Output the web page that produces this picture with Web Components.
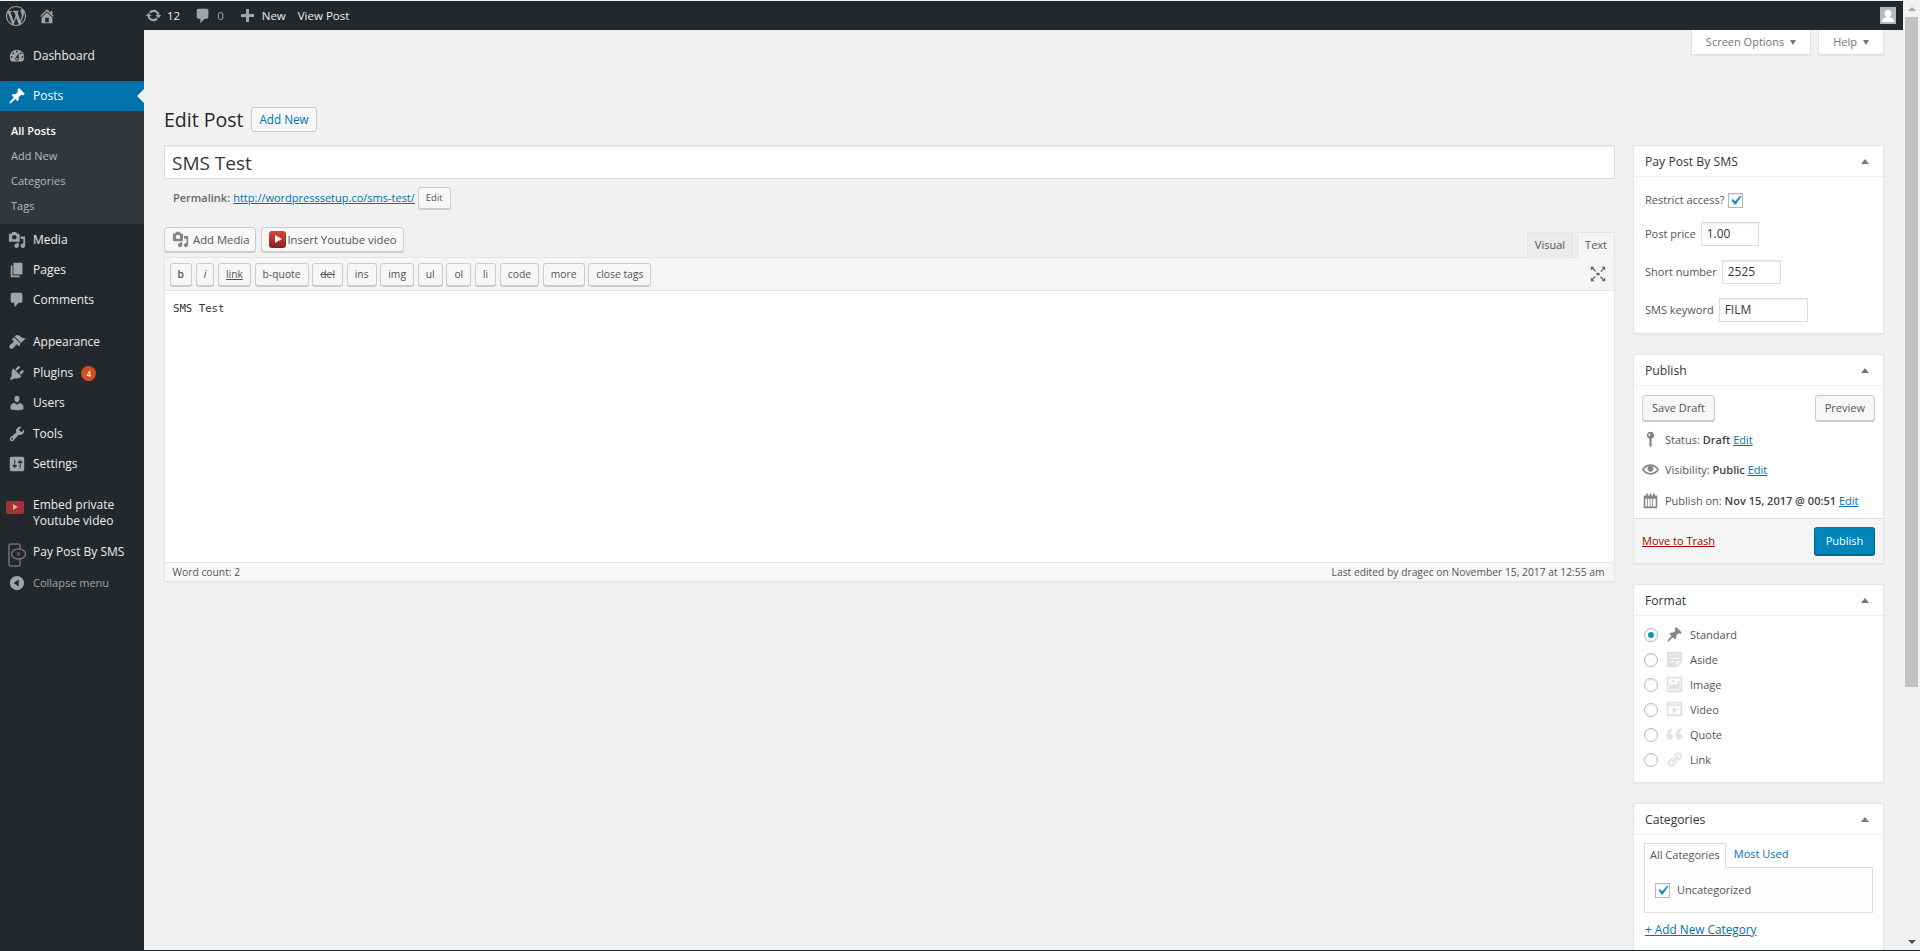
<!doctype html>
<html lang="en">
<head>
<meta charset="utf-8">
<title>Edit Post</title>
<style>
  html, body { margin: 0; height: 951px; overflow: hidden; background: #f1f1f1; }
  body { font: 11px/1.4 "Open Sans", "Liberation Sans", sans-serif; color: #444; }
  a { color: #0073aa; }
</style>
</head>
<body>
<wp-app>
  <wp-admin-bar slot="bar"></wp-admin-bar>
  <wp-side-menu slot="menu"></wp-side-menu>
  <wp-edit-screen slot="main"></wp-edit-screen>
</wp-app>

<script>
// dashicons, redrawn as paths on a 20x20 grid
const ICONS = {
  wp: 'M20 10c0-5.51-4.49-10-10-10C4.48 0 0 4.49 0 10c0 5.52 4.48 10 10 10 5.51 0 10-4.48 10-10zM7.78 15.37L4.37 6.22c.55-.02 1.17-.08 1.17-.08.5-.06.44-1.13-.06-1.11 0 0-1.45.11-2.37.11-.18 0-.37 0-.58-.01C4.12 2.69 6.87 1.11 10 1.11c2.33 0 4.45.87 6.05 2.34-.68-.11-1.65.39-1.65 1.58 0 .74.45 1.36.9 2.1.35.61.55 1.36.55 2.46 0 1.49-1.4 5-1.4 5l-3.03-8.37c.54-.02.82-.17.82-.17.5-.05.44-1.25-.06-1.22 0 0-1.44.12-2.38.12-.87 0-2.33-.12-2.33-.12-.5-.03-.56 1.2-.06 1.22l.92.08 1.26 3.41zM17.41 10c.24-.64.74-1.87.43-4.25.7 1.29 1.05 2.71 1.05 4.25 0 3.29-1.73 6.24-4.4 7.78.97-2.59 1.94-5.2 2.92-7.78zM6.1 18.09C3.12 16.65 1.11 13.53 1.11 10c0-1.3.23-2.48.72-3.59C3.25 10.3 4.67 14.2 6.1 18.09zm4.03-6.63l2.58 6.98c-.86.29-1.76.45-2.71.45-.79 0-1.57-.11-2.29-.33.81-2.38 1.62-4.74 2.42-7.1z',
  home: 'M16 8.5l1.53 1.53-1.06 1.06L10 4.62l-6.47 6.47-1.06-1.06L10 2.5l4 4v-2h2v4zm-6-2.46l6 5.99V18H4v-6.03zM12 17v-5H8v5h4z',
  update: 'M10.2 3.28c3.53 0 6.43 2.61 6.92 6h2.08l-3.5 4-3.5-4h2.32c-.45-1.97-2.21-3.45-4.32-3.45-1.45 0-2.73.71-3.54 1.78L4.95 5.66C6.23 4.2 8.11 3.28 10.2 3.28zm-.4 13.44c-3.52 0-6.43-2.61-6.92-6H.8l3.5-4c1.17 1.33 2.33 2.67 3.5 4H5.48c.45 1.97 2.21 3.45 4.32 3.45 1.45 0 2.73-.71 3.54-1.78l1.71 1.95c-1.28 1.46-3.15 2.38-5.25 2.38z',
  comment: 'M5 2h9c1.1 0 2 .9 2 2v7c0 1.1-.9 2-2 2h-2l-5 5v-5H5c-1.1 0-2-.9-2-2V4c0-1.1.9-2 2-2z',
  plus: 'M17 7v3h-5v5H9v-5H4V7h5V2h3v5h5z',
  dashboard: 'M3.76 16h12.48c1.1-1.37 1.76-3.11 1.76-5 0-4.42-3.58-8-8-8s-8 3.58-8 8c0 1.89.66 3.63 1.76 5zM10 4c.55 0 1 .45 1 1s-.45 1-1 1-1-.45-1-1 .45-1 1-1zM6 6c.55 0 1 .45 1 1s-.45 1-1 1-1-.45-1-1 .45-1 1-1zm8 0c.55 0 1 .45 1 1s-.45 1-1 1-1-.45-1-1 .45-1 1-1zm-5.37 5.55L12 7v6c0 1.1-.9 2-2 2s-2-.9-2-2c0-.57.24-1.08.63-1.45zM4 10c.55 0 1 .45 1 1s-.45 1-1 1-1-.45-1-1 .45-1 1-1zm12 0c.55 0 1 .45 1 1s-.45 1-1 1-1-.45-1-1 .45-1 1-1zm-5 3c0-.55-.45-1-1-1s-1 .45-1 1 .45 1 1 1 1-.45 1-1z',
  post: 'M10.44 3.02l1.82-1.82 6.36 6.35-1.83 1.82c-1.05-.68-2.48-.57-3.41.36l-.75.75c-.92.93-1.04 2.35-.35 3.41l-1.83 1.82-2.41-2.41-2.8 2.79c-.42.42-3.38 2.71-3.8 2.29s1.86-3.39 2.28-3.81l2.79-2.79L4.1 9.36l1.83-1.82c1.05.69 2.48.57 3.4-.36l.75-.75c.93-.92 1.05-2.35.36-3.41z',
  media: 'M13 11V4c0-.55-.45-1-1-1h-1.67L9 1H5L3.67 3H2c-.55 0-1 .45-1 1v7c0 .55.45 1 1 1h10c.55 0 1-.45 1-1zM7 4.5c1.38 0 2.5 1.12 2.5 2.5S8.38 9.5 7 9.5 4.5 8.38 4.5 7 5.62 4.5 7 4.5zM14 6h5v10.5c0 1.38-1.12 2.5-2.5 2.5S14 17.88 14 16.5s1.12-2.5 2.5-2.5c.17 0 .34.02.5.05V9h-3V6zm-4 8.05V13h2v3.5c0 1.38-1.12 2.5-2.5 2.5S7 17.88 7 16.5 8.12 14 9.5 14c.17 0 .34.02.5.05z',
  page: 'M6 15V2h10v13H6zm-1 1h8v2H3V5h2v11z',
  appearance: 'M14.48 11.06L7.41 3.99l1.5-1.5c.5-.56 2.3-.47 3.51.32 1.21.8 1.43 1.28 2.91 2.1 1.18.64 2.45 1.26 4.45.85zm-.71.71L6.7 4.7 4.93 6.47c-.39.39-.39 1.02 0 1.41l1.06 1.06c.39.39.39 1.03 0 1.42-.6.6-1.43 1.11-2.21 1.69-.35.26-.7.53-1.01.84C1.43 13.71.96 15.65 2.15 16.85s3.14.73 4.36-.49c.31-.31.58-.66.84-1.01.58-.78 1.09-1.61 1.69-2.21.39-.39 1.02-.39 1.41 0l1.06 1.06c.39.39 1.02.39 1.41 0z',
  plugins: 'M13.11 4.36L9.87 7.6 8 5.73l3.24-3.24c.35-.34 1.05-.2 1.56.32.52.51.66 1.21.31 1.55zm-8 1.77l.91-1.12 9.01 9.01-1.19.84c-.71.71-2.63 1.16-3.82 1.16H6.14L4.9 17.26c-.59.59-1.54.59-2.12 0-.59-.58-.59-1.53 0-2.12l1.24-1.24v-3.88c0-1.13.4-3.19 1.09-3.89zm7.26 3.97l3.24-3.24c.34-.35 1.04-.21 1.55.31.52.51.66 1.21.31 1.55l-3.24 3.25z',
  users: 'M10 9.25c-2.27 0-2.73-3.44-2.73-3.44C7 4.02 7.82 2 9.97 2c2.16 0 2.98 2.02 2.71 3.81 0 0-.41 3.44-2.68 3.44zm0 2.57L12.72 10c2.39 0 4.52 2.33 4.52 4.53v2.49s-3.65 1.13-7.24 1.13c-3.65 0-7.24-1.13-7.24-1.13v-2.49c0-2.25 1.94-4.48 4.47-4.48z',
  tools: 'M16.68 9.77c-1.34 1.34-3.3 1.67-4.95.99l-5.41 6.52c-.99.99-2.59.99-3.58 0s-.99-2.59 0-3.57l6.52-5.42c-.68-1.65-.35-3.61.99-4.95 1.28-1.28 3.12-1.62 4.72-1.06l-2.89 2.89 2.82 2.82 2.86-2.87c.53 1.58.18 3.39-1.08 4.65zM3.81 16.21c.4.39 1.04.39 1.43 0 .4-.4.4-1.04 0-1.43-.39-.4-1.03-.4-1.43 0-.39.39-.39 1.03 0 1.43z',
  settings: 'M18 16V4c0-1.1-.9-2-2-2H4c-1.1 0-2 .9-2 2v12c0 1.1.9 2 2 2h12c1.1 0 2-.9 2-2zM8 11h1c.55 0 1 .45 1 1s-.45 1-1 1H8v1.5c0 .28-.22.5-.5.5s-.5-.22-.5-.5V13H6c-.55 0-1-.45-1-1s.45-1 1-1h1V5.5c0-.28.22-.5.5-.5s.5.22.5.5V11zm5-2h-1c-.55 0-1-.45-1-1s.45-1 1-1h1V5.5c0-.28.22-.5.5-.5s.5.22.5.5V7h1c.55 0 1 .45 1 1s-.45 1-1 1h-1v5.5c0 .28-.22.5-.5.5s-.5-.22-.5-.5V9z',
  collapse: 'M10 2.16c4.33 0 7.84 3.51 7.84 7.84s-3.51 7.84-7.84 7.84S2.16 14.33 2.16 10 5.71 2.16 10 2.16zm2 11.72V6.12L6.18 9.97z',
  aside: 'M1 1h18v12l-6 6H1V1zm3 3v1h12V4H4zm0 4v1h12V8H4zm6 5v-1H4v1h6zm2 4l5-5h-5v5z',
  image: 'M2.25 1h15.5c.69 0 1.25.56 1.25 1.25v15.5c0 .69-.56 1.25-1.25 1.25H2.25C1.56 19 1 18.44 1 17.75V2.25C1 1.56 1.56 1 2.25 1zM17 17V3H3v14h14zM10 6c0-1.1-.9-2-2-2s-2 .9-2 2 .9 2 2 2 2-.9 2-2zm3 5s0-6 3-6v10c0 .55-.45 1-1 1H5c-.55 0-1-.45-1-1V8c2 0 3 4 3 4s1-3 3-3 3 2 3 2z',
  video: 'M2 1h16c.55 0 1 .45 1 1v16l-18-.02V2c0-.55.45-1 1-1zm4 1L4 5h1l2-3H6zm4 0H9L7 5h1zm3 0h-1l-2 3h1zm3 0h-1l-2 3h1zm1 14V6H3v10h14zM8 7l6 4-6 4V7z',
  quote: 'M8.54 12.74c0-.87-.24-1.61-.72-2.22-.73-.92-2.14-1.03-2.96-.85-.34-1.93 1.3-4.39 3.42-5.45L6.65 2.45C3.45 3.93.8 7.34.8 11.09c0 2.58 1.1 4.35 2.9 4.8 2.54.63 4.84-1.26 4.84-3.15zm10.48 0c0-.87-.24-1.61-.72-2.22-.73-.92-2.14-1.03-2.96-.85-.34-1.93 1.3-4.39 3.42-5.45l-1.63-1.77c-3.2 1.48-5.85 4.89-5.85 8.64 0 2.58 1.1 4.35 2.9 4.8 2.54.63 4.84-1.26 4.84-3.15z',
  link: 'M17.74 2.76c1.68 1.69 1.68 4.41 0 6.1l-1.53 1.52c-1.12 1.12-2.7 1.47-4.14 1.09l2.62-2.61.76-.77.76-.76c.84-.84.84-2.2 0-3.04-.84-.85-2.2-.85-3.04 0l-.77.76-3.38 3.38c-.37-1.44-.02-3.02 1.1-4.14l1.52-1.53c1.69-1.68 4.42-1.68 6.1 0zM8.59 13.43l5.34-5.34c.42-.42.42-1.1 0-1.52-.44-.43-1.13-.39-1.53 0l-5.33 5.34c-.42.42-.42 1.1 0 1.52.44.43 1.13.39 1.52 0zm-.76 2.29l4.14-4.15c.38 1.44.03 3.02-1.09 4.14l-1.52 1.53c-1.69 1.68-4.41 1.68-6.1 0-1.68-1.68-1.68-4.42 0-6.1l1.53-1.52c1.12-1.12 2.7-1.47 4.14-1.1l-4.14 4.15c-.85.84-.85 2.2 0 3.05.84.84 2.2.84 3.04 0z',
  pin: 'M10 1a4.2 4.2 0 0 0-1.3 8.2V17l1.3 2.5 1.3-2.5V9.2A4.2 4.2 0 0 0 10 1zM8.6 3.2a1.2 1.2 0 1 1 0 2.4 1.2 1.2 0 0 1 0-2.4z',
  eye: 'M19.7 9.4C17.7 6 14 3.9 10 3.9S2.3 6 .3 9.4L0 10l.3.6c2 3.4 5.7 5.5 9.7 5.5s7.7-2.1 9.7-5.5l.3-.6-.3-.6zM10 14.1c-3.1 0-6-1.6-7.7-4.1C3.6 8 5.7 6.6 8 6.1c-.9.6-1.5 1.7-1.5 2.9 0 1.9 1.6 3.5 3.5 3.5s3.5-1.6 3.5-3.5c0-1.2-.6-2.3-1.5-2.9 2.3.5 4.4 1.9 5.7 3.9-1.7 2.5-4.6 4.1-7.7 4.1z',
  calendar: 'M15 4h3v15H2V4h3V2.5a1 1 0 0 1 2 0V4h2V2.5a1 1 0 0 1 2 0V4h2V2.5a1 1 0 0 1 2 0V4zM4 8v9h2V8H4zm3 0v9h2V8H7zm3 0v9h2V8h-2zm3 0v9h3V8h-3z',
  expand: 'M1 1h4.5L4.2 2.6 7.6 6 6.4 7.2 3 3.8 1 5.5zM19 1v4.5l-1.6-1.3L14 7.6 12.8 6.4 16.2 3 14.5 1zM1 19v-4.5l1.6 1.3L6 12.4 7.2 13.6 3.8 17 5.5 19zM19 19h-4.5l1.3-1.6L12.4 14 13.6 12.8 17 16.2 19 14.5zM8 8.3h4v3.4H8z',
  check: 'M14.83 4.89l1.34.94-5.81 8.38H9.02L5.78 9.67l1.34-1.25 2.57 2.4z'
}

class WpIcon extends HTMLElement {
  connectedCallback () {
    const size = this.getAttribute('size') || 18
    if (!this.shadowRoot) this.attachShadow({ mode: 'open' })
    this.shadowRoot.innerHTML = `
      <style>
        :host { display: inline-flex; flex: none; width: ${size}px; height: ${size}px; color: inherit; }
        svg { display: block; width: 100%; height: 100%; fill: currentColor; }
      </style>
      <svg viewBox="0 0 20 20"><path fill-rule="evenodd" d="${ICONS[this.getAttribute('name')] || ''}"/></svg>`
  }
}
customElements.define('wp-icon', WpIcon)

// outer frame: bar on top, menu + main below, scrollbar on the right edge
class WpApp extends HTMLElement {
  constructor () {
    super()
    this.attachShadow({ mode: 'open' })
    this.shadowRoot.innerHTML = `
      <style>
        :host { display: grid; grid-template-columns: 144px minmax(0, 1fr) 17px; grid-template-rows: 29px minmax(0, 1fr) 1px;
                height: 951px; padding-top: 1px; box-sizing: border-box; overflow: hidden; }
        ::slotted([slot=bar]) { grid-column: 1 / 3; }
        .track { grid-column: 3; grid-row: 1 / 3; margin-top: -1px; display: flex; flex-direction: column; background: #f1f1f1; align-items: center; }
        .arrow { flex: none; height: 17px; width: 100%; display: flex; align-items: center; justify-content: center; }
        .arrow i { width: 0; height: 0; border: 4px solid transparent; }
        .up i { border-bottom: 4px solid #a3a3a3; border-top: 0; }
        .down i { border-top: 4px solid #505050; border-bottom: 0; }
        .thumb { width: 13px; height: 670px; flex: none; background: #c1c1c1; }
        .rest { flex: 1; }
        .edge { grid-column: 1 / -1; grid-row: 3; background: #23282d; }
      </style>
      <slot name="bar"></slot>
      <slot name="menu"></slot>
      <slot name="main"></slot>
      <div class="track">
        <div class="arrow up"><i></i></div>
        <div class="thumb"></div>
        <div class="rest"></div>
        <div class="arrow down"><i></i></div>
      </div>
      <div class="edge"></div>`
  }
}
customElements.define('wp-app', WpApp)

class WpAdminBar extends HTMLElement {
  constructor () {
    super()
    this.attachShadow({ mode: 'open' })
    this.shadowRoot.innerHTML = `
      <style>
        :host { display: flex; align-items: center; background: #23282d; color: #eee; height: 29px; font-size: 11.5px; line-height: 29px; }
        .grp { display: flex; align-items: center; }
        wp-icon { color: #a0a5aa; }
        .logo { margin-left: 6px; }
        .home { margin-left: 12px; }
        .upd { margin-left: 89px; }
        .num { margin-left: 5px; }
        .com { margin-left: 14px; color: #a0a5aa; }
        .new { margin-left: 13px; }
        .new wp-icon { position: relative; top: 1px; }
        .view { margin-left: 12px; }
        .me { margin-left: auto; margin-right: 7px; width: 16px; height: 17px; display: block; }
      </style>
      <wp-icon class="logo" name="wp" size="20"></wp-icon>
      <wp-icon class="home" name="home" size="18"></wp-icon>
      <div class="grp upd"><wp-icon name="update" size="17"></wp-icon><span class="num">12</span></div>
      <div class="grp com"><wp-icon name="comment" size="18"></wp-icon><span class="num">0</span></div>
      <div class="grp new"><wp-icon name="plus" size="20"></wp-icon><span class="num">New</span></div>
      <div class="grp view"><span>View Post</span></div>
      <svg class="me" viewBox="0 0 16 17"><rect width="16" height="17" fill="#b8b8b8"/><circle cx="8" cy="6.5" r="3.4" fill="#fff"/><path d="M2 15c0-3.5 2.6-5 6-5s6 1.5 6 5z" fill="#fff"/></svg>`
  }
}
customElements.define('wp-admin-bar', WpAdminBar)

// one row of the left menu
class WpMenuItem extends HTMLElement {
  constructor () {
    super()
    this.attachShadow({ mode: 'open' })
    this.shadowRoot.innerHTML = `
      <style>
        :host { display: flex; align-items: center; color: #eee; font-size: 12px; line-height: 16px; min-height: 30.4px; position: relative; }
        :host([current]) { background: #0073aa; color: #fff; min-height: 30px; }
        :host([current]) .ic { color: #fff; }
        :host([current])::after { content: ""; position: absolute; right: 0; top: 50%; margin-top: -7px; border: 7px solid transparent; border-right-color: #f1f1f1; border-left: 0; }
        :host([dim]) { color: #a0a5aa; font-size: 11px; }
        .ic { width: 33px; flex: none; padding-left: 7.5px; box-sizing: border-box; color: #a0a5aa; display: flex; }
      </style>
      <div class="ic"><slot name="icon"></slot></div>
      <div><slot></slot></div>`
  }
}
customElements.define('wp-menu-item', WpMenuItem)

class WpSideMenu extends HTMLElement {
  constructor () {
    super()
    this.attachShadow({ mode: 'open' })
    const item = (name, label, extra = '') => `<wp-menu-item ${extra}><wp-icon slot="icon" name="${name}"></wp-icon>${label}</wp-menu-item>`
    this.shadowRoot.innerHTML = `
      <style>
        :host { display: block; background: #23282d; height: 100%; padding-top: 11px; box-sizing: border-box; }
        .sub { background: #32373c; padding: 7px 0 6px; font-size: 11px; color: rgba(240,245,250,.7); }
        .sub div { height: 25px; line-height: 25px; padding-left: 11px; }
        .sub .on { color: #fff; font-weight: 600; }
        .gap { height: 11.6px; }
        .badge { display: inline-block; width: 15px; height: 15px; line-height: 15px; margin-left: 5px; border-radius: 50%; background: #d54e21; color: #fff; font-size: 8px; text-align: center; vertical-align: 0; font-weight: 600; }
        .top { margin-bottom: 10px; }
        .yt { margin-top: 16px; min-height: 36px; }
        .pay { margin-top: 6px; }
        .ytico { display: block; width: 18px; height: 13px; margin: -12px 0 0 -1.5px; border-radius: 2px; background: #a23236; position: relative; }
        .ytico::after { content: ""; position: absolute; left: 7px; top: 3.5px; border: 3px solid transparent; border-left: 5px solid #e9a5a5; border-right: 0; }
        svg.phone { display: block; margin: 6px 0 0 0; }
      </style>
      <div class="top">${item('dashboard', 'Dashboard')}</div>
      ${item('post', 'Posts', 'current')}
      <div class="sub">
        <div class="on">All Posts</div><div>Add New</div><div>Categories</div><div>Tags</div>
      </div>
      ${item('media', 'Media')}
      ${item('page', 'Pages')}
      ${item('comment', 'Comments')}
      <div class="gap"></div>
      ${item('appearance', 'Appearance')}
      ${item('plugins', 'Plugins <span class="badge">4</span>')}
      ${item('users', 'Users')}
      ${item('tools', 'Tools')}
      ${item('settings', 'Settings')}
      <wp-menu-item class="yt"><span slot="icon" class="ytico"></span>Embed private<br>Youtube video</wp-menu-item>
      <wp-menu-item class="pay"><svg slot="icon" class="phone" width="20" height="24" viewBox="0 0 20 24" fill="none" stroke="#6d7278" stroke-width="1.5"><rect x="1" y="1" width="11" height="22" rx="2"/><ellipse cx="10.5" cy="11" rx="7" ry="5" fill="#23282d"/><circle cx="10.5" cy="11" r="2" fill="#7a4044" stroke="none"/></svg>Pay Post By SMS</wp-menu-item>
      <wp-menu-item dim><wp-icon slot="icon" name="collapse"></wp-icon>Collapse menu</wp-menu-item>`
  }
}
customElements.define('wp-side-menu', WpSideMenu)

class WpButton extends HTMLElement {
  constructor () {
    super()
    this.attachShadow({ mode: 'open' })
    this.shadowRoot.innerHTML = `
      <style>
        :host { display: inline-flex; align-items: center; justify-content: center; box-sizing: border-box; height: 26px; padding: 0 9px; font-size: 11px; color: #555; background: #f7f7f7; border: 1px solid #ccc; border-radius: 3px; box-shadow: 0 1px 0 #ccc; white-space: nowrap; }
        :host([primary]) { background: #0085ba; border-color: #0073aa #006799 #006799; box-shadow: 0 1px 0 #006799; color: #fff; height: 28px; width: 61px; padding: 0; }
        :host([outline]) { font-size: 11.7px; height: 25px; padding: 0 7px; color: #0073aa; box-shadow: none; }
        :host([small]) { height: 22px; padding: 0 7px; font-size: 9.5px; }
        :host([qt]) { height: 23px; padding: 0 7px; font-size: 10.33px; line-height: 1; }
      </style>
      <slot></slot>`
  }
}
customElements.define('wp-button', WpButton)

class WpMetaBox extends HTMLElement {
  constructor () {
    super()
    this.attachShadow({ mode: 'open' })
    this.shadowRoot.innerHTML = `
      <style>
        :host { display: block; background: #fff; border: 1px solid #e5e5e5; box-shadow: 0 1px 1px rgba(0,0,0,.04); font-size: 11px; color: #555; }
        header { display: flex; align-items: center; justify-content: space-between; box-sizing: border-box; height: 31px; padding: 1px 11px 0; border-bottom: 1px solid #eee; font-size: 12.2px; color: #32373c; }
        header i { width: 0; height: 0; border: 4px solid transparent; border-bottom: 5px solid #72777c; border-top: 0; margin-right: 3px; }
      </style>
      <header><span><slot name="title"></slot></span><i></i></header>
      <slot></slot>`
  }
}
customElements.define('wp-meta-box', WpMetaBox)

class WpField extends HTMLElement {
  constructor () {
    super()
    this.attachShadow({ mode: 'open' })
    const w = this.getAttribute('width')
    this.shadowRoot.innerHTML = `
      <style>
        :host { display: flex; align-items: center; gap: 5px; color: #555; font-size: 11px; }
        .box { box-sizing: border-box; width: ${w}px; height: 24px; line-height: 22px; padding-left: 5px; border: 1px solid #ddd; box-shadow: inset 0 1px 2px rgba(0,0,0,.07); background: #fff; font-size: 12px; color: #32373c; }
      </style>
      <span><slot name="label"></slot></span>
      <div class="box"><slot></slot></div>`
  }
}
customElements.define('wp-field', WpField)

class WpCheckbox extends HTMLElement {
  constructor () {
    super()
    this.attachShadow({ mode: 'open' })
    this.shadowRoot.innerHTML = `
      <style>
        :host { display: inline-flex; flex: none; box-sizing: border-box; width: 15px; height: 15px; background: #fff; border: 1px solid #b4b9be; box-shadow: inset 0 1px 2px rgba(0,0,0,.1); color: #1e8cbe; align-items: center; justify-content: center; }
      </style>
      <wp-icon name="check" size="19"></wp-icon>`
  }
}
customElements.define('wp-checkbox', WpCheckbox)

class WpRadio extends HTMLElement {
  constructor () {
    super()
    this.attachShadow({ mode: 'open' })
    this.shadowRoot.innerHTML = `
      <style>
        :host { display: flex; align-items: center; height: 25px; font-size: 11px; color: #555; }
        .r { width: 14px; height: 14px; flex: none; box-sizing: border-box; border: 1px solid #b4b9be; border-radius: 50%; margin-right: 8px; display: flex; align-items: center; justify-content: center; background: #fff; box-shadow: inset 0 1px 2px rgba(0,0,0,.1); }
        :host([checked]) .r::after { content: ""; width: 6px; height: 6px; border-radius: 50%; background: #1e8cbe; }
        wp-icon { color: #e0e0e0; margin-right: 7px; }
        :host([checked]) wp-icon { color: #82878c; }
      </style>
      <span class="r"></span><wp-icon name="${this.getAttribute('icon')}" size="17"></wp-icon><slot></slot>`
  }
}
customElements.define('wp-radio', WpRadio)

class WpEditScreen extends HTMLElement {
  constructor () {
    super()
    this.attachShadow({ mode: 'open' })
    const qt = ['<b style="font-weight:600">b</b>', '<i>i</i>', '<u>link</u>', 'b-quote', '<s>del</s>', 'ins', 'img', 'ul', 'ol', 'li', 'code', 'more', 'close tags']
    this.shadowRoot.innerHTML = `
      <style>
        :host { display: block; overflow: hidden; min-width: 0; height: 100%; padding: 0 19px 0 20px; box-sizing: border-box; }
        a { color: #0073aa; }
        .tabs { display: flex; justify-content: flex-end; gap: 7px; height: 26px; }
        .tab { display: flex; align-items: center; gap: 6px; height: 25px; box-sizing: border-box; padding: 0 14px; background: #fff; border: 1px solid #e1e1e1; border-top: 0; box-shadow: 0 1px 1px rgba(0,0,0,.04); font-size: 11px; color: #72777c; }
        .tab i { width: 0; height: 0; border: 3.5px solid transparent; border-top: 5px solid #72777c; border-bottom: 0; }
        .cols { display: grid; grid-template-columns: minmax(0, 1fr) 251px; column-gap: 18px; margin-top: 51px; }
        h1 { margin: 0; font-size: 19.5px; font-weight: 400; line-height: 25px; color: #23282d; display: flex; align-items: flex-start; gap: 8px; grid-column: 1 / 3; height: 38px; }
        .title { box-sizing: border-box; height: 34px; border: 1px solid #ddd; background: #fff; font-size: 19px; line-height: 32px; padding: 1px 0 0 7px; color: #32373c; box-shadow: inset 0 1px 2px rgba(0,0,0,.07); }
        .perma { display: flex; align-items: center; height: 22px; margin-top: 8px; padding-left: 9px; font-size: 11px; color: #666; gap: 3px; }
        .perma b { font-weight: 600; }
        .bar { display: flex; align-items: flex-start; margin-top: 18px; height: 30px; }
        .bar wp-button { margin-right: 5px; height: 25px; padding: 0 6px 0 7px; font-size: 11.3px; }
        .bar wp-icon { color: #82878c; margin-right: 4px; }
        .yt { width: 17px; height: 17px; border-radius: 3px; background: linear-gradient(#d8453e, #8f1e1e); margin-right: 1px; position: relative; flex: none; }
        .yt::after { content: ""; position: absolute; left: 6px; top: 4px; border: 4.5px solid transparent; border-left: 7px solid #f4f4f4; border-right: 0; }
        .mode { margin-left: auto; align-self: flex-end; display: flex; gap: 4px; font-size: 11px; color: #555; }
        .mode div { box-sizing: border-box; height: 25px; line-height: 24px; padding: 0 7px; background: #ebebeb; border: 1px solid #e5e5e5; border-bottom: 0; }
        .mode .on { background: #f5f5f5; height: 26px; margin-bottom: -1px; position: relative; z-index: 1; }
        .editor { border: 1px solid #e5e5e5; box-shadow: 0 1px 1px rgba(0,0,0,.04); }
        .tools { display: flex; align-items: center; gap: 3.7px; height: 33px; padding: 0 5px 0 4.5px; box-sizing: border-box; background: #f5f5f5; border-bottom: 1px solid #e5e5e5; }
        .tools wp-icon { margin-left: auto; margin-right: 3px; color: #666; }
        .text { height: 271px; box-sizing: border-box; background: #fff; padding: 11px 8px; font: 10.7px/1.4 "DejaVu Sans Mono", "Liberation Mono", monospace; color: #333; }
        .status { display: flex; justify-content: space-between; align-items: center; box-sizing: border-box; height: 19px; padding: 0 9.5px 0 7.5px; font-size: 10.3px; color: #555; background: #f7f7f7; border-top: 1px solid #e5e5e5; }
        .side { display: flex; flex-direction: column; gap: 20px; }
        .pay { padding: 14px 11px 11px; }
        .pay wp-field + wp-field { margin-top: 14px; }
        .pay .r { display: flex; align-items: center; gap: 3px; height: 18px; margin-bottom: 13px; }
        .pub { padding: 9px 8px 2.5px; }
        .pub .btns { display: flex; justify-content: space-between; margin-bottom: 3px; }
        .row { display: flex; align-items: center; height: 30.5px; gap: 6px; }
        .row wp-icon { color: #82878c; }
        .row b { font-weight: 600; color: #444; }
        .foot { display: flex; justify-content: space-between; align-items: center; box-sizing: border-box; height: 45px; padding: 0 8px; background: #f5f5f5; border-top: 1px solid #ddd; }
        .foot a { color: #a00; }
        .fmt { padding: 6px 10px 10px 10px; }
        .cat { padding: 8px 10px 40px; }
        .cat .t { display: flex; height: 24px; }
        .cat .t div { box-sizing: border-box; padding: 3px 5px 0; height: 25px; }
        .cat .t .a { border: 1px solid #ddd; border-bottom: 0; background: #fff; position: relative; z-index: 1; }
        .cat .t .b { color: #0073aa; padding-left: 8px; }
        .cat .p { box-sizing: border-box; height: 46px; border: 1px solid #ddd; background: #fdfdfd; display: flex; align-items: center; gap: 7px; padding-left: 10px; }
        .cat .add { margin: 8px 0 0 1px; display: block; font-size: 11.8px; }
      </style>
      <div class="tabs">
        <div class="tab">Screen Options <i></i></div>
        <div class="tab">Help <i></i></div>
      </div>
      <div class="cols">
        <h1>Edit Post <wp-button outline>Add New</wp-button></h1>
        <div class="left">
          <div class="title">SMS Test</div>
          <div class="perma"><b>Permalink:</b> <a href="#">http://wordpresssetup.co/sms-test/</a> <wp-button small>Edit</wp-button></div>
          <div class="bar">
            <wp-button><wp-icon name="media" size="17"></wp-icon>Add Media</wp-button>
            <wp-button><span class="yt"></span>Insert Youtube video</wp-button>
            <div class="mode"><div>Visual</div><div class="on">Text</div></div>
          </div>
          <div class="editor">
            <div class="tools">${qt.map(q => `<wp-button qt>${q}</wp-button>`).join('')}<wp-icon name="expand" size="16"></wp-icon></div>
            <div class="text">SMS Test</div>
            <div class="status"><span>Word count: 2</span><span>Last edited by dragec on November 15, 2017 at 12:55 am</span></div>
          </div>
        </div>
        <div class="side">
          <wp-meta-box>
            <span slot="title">Pay Post By SMS</span>
            <div class="pay">
              <div class="r">Restrict access? <wp-checkbox></wp-checkbox></div>
              <wp-field width="58"><span slot="label">Post price</span>1.00</wp-field>
              <wp-field width="59"><span slot="label">Short number</span>2525</wp-field>
              <wp-field width="89"><span slot="label">SMS keyword</span>FILM</wp-field>
            </div>
          </wp-meta-box>
          <wp-meta-box>
            <span slot="title">Publish</span>
            <div class="pub">
              <div class="btns"><wp-button>Save Draft</wp-button><wp-button>Preview</wp-button></div>
              <div class="row"><wp-icon name="pin" size="17"></wp-icon><span>Status: <b>Draft</b> <a href="#">Edit</a></span></div>
              <div class="row"><wp-icon name="eye" size="17"></wp-icon><span>Visibility: <b>Public</b> <a href="#">Edit</a></span></div>
              <div class="row"><wp-icon name="calendar" size="17"></wp-icon><span>Publish on: <b>Nov 15, 2017 @ 00:51</b> <a href="#">Edit</a></span></div>
            </div>
            <div class="foot"><a href="#">Move to Trash</a><wp-button primary>Publish</wp-button></div>
          </wp-meta-box>
          <wp-meta-box>
            <span slot="title">Format</span>
            <div class="fmt">
              <wp-radio checked icon="post">Standard</wp-radio>
              <wp-radio icon="aside">Aside</wp-radio>
              <wp-radio icon="image">Image</wp-radio>
              <wp-radio icon="video">Video</wp-radio>
              <wp-radio icon="quote">Quote</wp-radio>
              <wp-radio icon="link">Link</wp-radio>
            </div>
          </wp-meta-box>
          <wp-meta-box>
            <span slot="title">Categories</span>
            <div class="cat">
              <div class="t"><div class="a">All Categories</div><div class="b">Most Used</div></div>
              <div class="p"><wp-checkbox></wp-checkbox>Uncategorized</div>
              <a class="add" href="#">+ Add New Category</a>
            </div>
          </wp-meta-box>
        </div>
      </div>`
  }
}
customElements.define('wp-edit-screen', WpEditScreen)
</script>
</body>
</html>
